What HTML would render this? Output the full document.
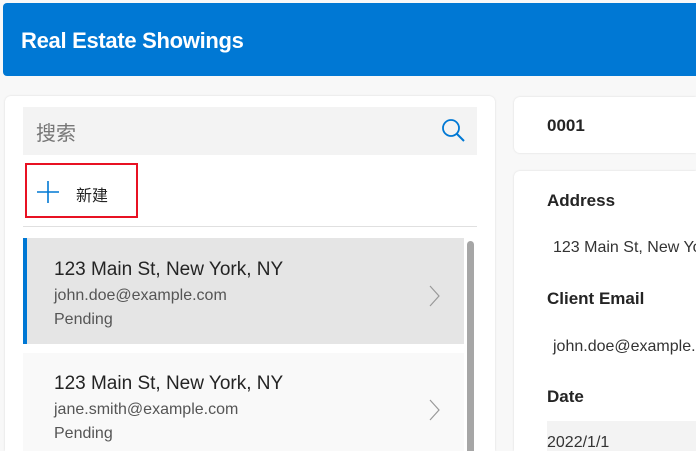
<!DOCTYPE html>
<html><head><meta charset="utf-8"><style>
*{box-sizing:border-box;margin:0;padding:0}
html,body{width:696px;height:451px;overflow:hidden}
body{background:#f8f8f8;font-family:"Segoe UI","Liberation Sans","Noto Sans CJK SC",sans-serif;position:relative;color:#242424;white-space:nowrap}
.abs{position:absolute}
.hdr{left:3px;top:3px;width:693px;height:73px;background:#0078d4;border-radius:4px 0 0 4px}
.hdr span{position:absolute;left:18px;top:25px;color:#fff;font-size:22px;font-weight:600;letter-spacing:-0.3px}
.panel{left:5px;top:96px;width:490px;height:355px;background:#fff;border-radius:6px 6px 0 0;box-shadow:0 0 2px rgba(0,0,0,.12)}
.search{left:23px;top:107px;width:454px;height:48px;background:#f3f3f3}
.newbtn{left:25px;top:163px;width:113px;height:55px;border:2px solid #e81123}
.div{left:23px;top:226px;width:454px;height:1px;background:#e0e0e0}
.item{left:23px;width:441px;overflow:hidden}
.t{position:absolute;left:31px;font-size:19px;color:#242424}
.e{position:absolute;left:31px;font-size:16px;color:#555}
.card{background:#fff;border-radius:6px 0 0 6px;box-shadow:0 0 2px rgba(0,0,0,.12);overflow:hidden}
.lbl{position:absolute;left:33px;font-size:17px;font-weight:600;color:#242424}
.val{position:absolute;left:39px;font-size:16px;color:#333}
</style></head><body>
<div class="abs hdr"><span>Real Estate Showings</span></div>
<div class="abs panel"></div>
<div class="abs search"><span style="position:absolute;left:13px;top:10px;font-size:20px;color:#777">搜索</span>
<svg style="position:absolute;left:414px;top:10px" width="30" height="30"><circle cx="14" cy="11" r="8" fill="none" stroke="#0078d4" stroke-width="1.8"/><line x1="20" y1="17" x2="27" y2="24" stroke="#0078d4" stroke-width="2"/></svg></div>
<div class="abs newbtn"><svg style="position:absolute;left:9px;top:15px" width="24" height="24"><line x1="12" y1="1" x2="12" y2="23" stroke="#0078d4" stroke-width="1.6"/><line x1="1" y1="12" x2="23" y2="12" stroke="#0078d4" stroke-width="1.6"/></svg><span style="position:absolute;left:49px;top:17px;font-size:16px;color:#242424">新建</span></div>
<div class="abs div"></div>
<div class="abs item" style="top:238px;height:106px;background:#e5e5e5;border-left:4px solid #0078d4">
<span class="t" style="left:27px;top:21px;font-weight:500">123 Main St, New York, NY</span>
<span class="e" style="left:27px;top:49px">john.doe@example.com</span>
<span class="e" style="left:27px;top:73px">Pending</span>
<svg style="position:absolute;left:401px;top:46px" width="14" height="24"><polyline points="2,2 11,12 2,22" fill="none" stroke="#999" stroke-width="1.2"/></svg></div>
<div class="abs item" style="top:353px;height:98px;background:#f9f9f9">
<span class="t" style="top:20px">123 Main St, New York, NY</span>
<span class="e" style="top:48px">jane.smith@example.com</span>
<span class="e" style="top:72px">Pending</span>
<svg style="position:absolute;left:405px;top:45px" width="14" height="24"><polyline points="2,2 11,12 2,22" fill="none" stroke="#999" stroke-width="1.2"/></svg></div>
<div class="abs" style="left:467px;top:241px;width:7px;height:210px;background:#a6a6a6;border-radius:4px 4px 0 0"></div>
<div class="abs card" style="left:514px;top:97px;width:182px;height:56px"><span style="position:absolute;left:33px;top:19px;font-size:17px;font-weight:600">0001</span></div>
<div class="abs card" style="left:514px;top:171px;width:182px;height:280px;border-radius:6px 0 0 0">
<span class="lbl" style="top:20px">Address</span>
<span class="val" style="top:68px">123 Main St, New York, NY</span>
<span class="lbl" style="top:118px">Client Email</span>
<span class="val" style="top:167px">john.doe@example.com</span>
<span class="lbl" style="top:216px">Date</span>
<div class="abs" style="left:33px;top:250px;width:149px;height:30px;background:#f3f3f3"><span style="position:absolute;left:0;top:13px;font-size:16px;color:#333">2022/1/1</span></div>
</div>
</body></html>
